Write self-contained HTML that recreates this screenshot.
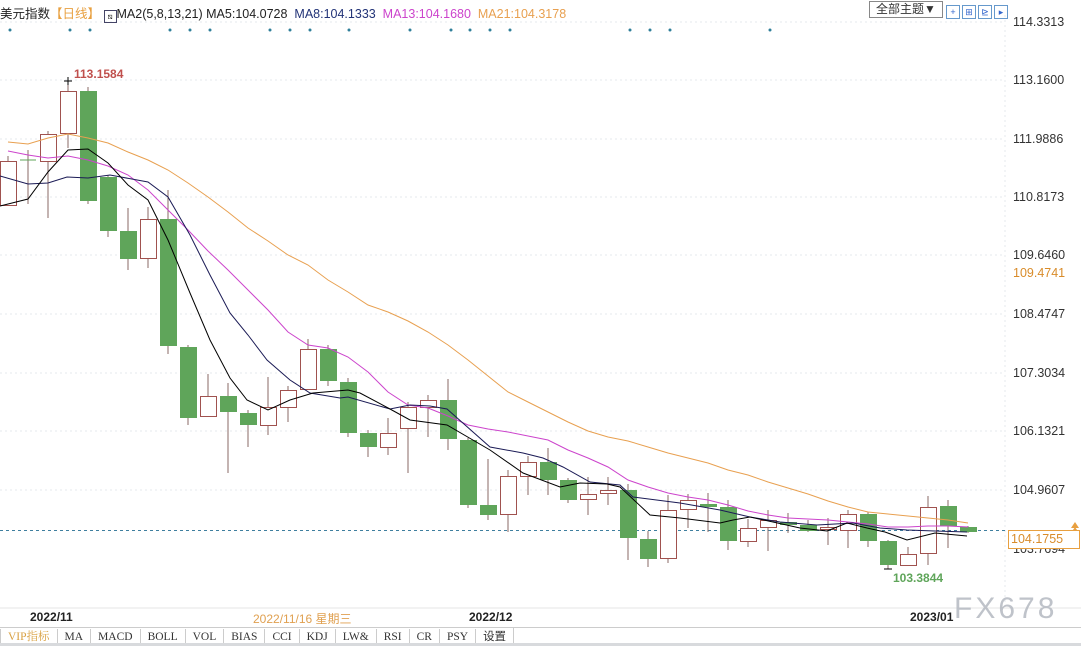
<!DOCTYPE html>
<html><head><meta charset="utf-8"><style>
body{margin:0;width:1081px;height:646px;overflow:hidden;background:#fff;font-family:"Liberation Sans","Noto Sans CJK SC",sans-serif;position:relative}
.t{position:absolute;white-space:nowrap}
.ax{position:absolute;left:1013px;font-size:12.5px;color:#333}
.tabs{position:absolute;left:0;top:627px;height:16px;width:1081px;border-top:1px solid #ccc;font-family:"Liberation Serif","Noto Serif CJK SC",serif;font-size:11.5px}
.tabs span{display:inline-block;height:16px;line-height:16px;padding:0 7px;border-right:1px solid #ccc;color:#333}
.ib{display:inline-block;width:12px;height:12px;border:1px solid #69c;margin-right:2px;font-size:9px;line-height:12px;text-align:center;color:#36c}
</style></head><body>
<svg width="1081" height="646" style="position:absolute;left:0;top:0">
<g stroke="#e4e8ee" stroke-dasharray="2,3" stroke-width="1">
<line x1="0" y1="22" x2="1005" y2="22"/><line x1="0" y1="80" x2="1005" y2="80"/><line x1="0" y1="139" x2="1005" y2="139"/><line x1="0" y1="197" x2="1005" y2="197"/><line x1="0" y1="255" x2="1005" y2="255"/><line x1="0" y1="314" x2="1005" y2="314"/><line x1="0" y1="373" x2="1005" y2="373"/><line x1="0" y1="431" x2="1005" y2="431"/><line x1="0" y1="490" x2="1005" y2="490"/>
<line x1="1005" y1="15" x2="1005" y2="608"/>
</g>
<line x1="0" y1="608" x2="1081" y2="608" stroke="#e6e6e6"/>
<line x1="0" y1="530.5" x2="1005" y2="530.5" stroke="#3f7f9f" stroke-dasharray="3,3"/>
<g fill="#2f7f9a">
<circle cx="10" cy="30" r="1.5"/><circle cx="70" cy="30" r="1.5"/><circle cx="90" cy="30" r="1.5"/><circle cx="170" cy="30" r="1.5"/><circle cx="190" cy="30" r="1.5"/><circle cx="210" cy="30" r="1.5"/><circle cx="270" cy="30" r="1.5"/><circle cx="290" cy="30" r="1.5"/><circle cx="310" cy="30" r="1.5"/><circle cx="349" cy="30" r="1.5"/><circle cx="410" cy="30" r="1.5"/><circle cx="451" cy="30" r="1.5"/><circle cx="470" cy="30" r="1.5"/><circle cx="490" cy="30" r="1.5"/><circle cx="510" cy="30" r="1.5"/><circle cx="630" cy="30" r="1.5"/><circle cx="650" cy="30" r="1.5"/><circle cx="670" cy="30" r="1.5"/><circle cx="770" cy="30" r="1.5"/>
</g>
<g stroke="#8a6a66" stroke-width="1">
<line x1="8" y1="156" x2="8" y2="205"/><line x1="28" y1="150" x2="28" y2="204"/><line x1="48" y1="131" x2="48" y2="218"/><line x1="68" y1="80" x2="68" y2="148"/><line x1="88" y1="87" x2="88" y2="204"/><line x1="108" y1="175" x2="108" y2="237"/><line x1="128" y1="208" x2="128" y2="270"/><line x1="148" y1="207" x2="148" y2="268"/><line x1="168" y1="190" x2="168" y2="354"/><line x1="188" y1="345" x2="188" y2="425"/><line x1="208" y1="374" x2="208" y2="416"/><line x1="228" y1="383" x2="228" y2="473"/><line x1="248" y1="410" x2="248" y2="447"/><line x1="268" y1="377" x2="268" y2="435"/><line x1="288" y1="386" x2="288" y2="422"/><line x1="308" y1="339" x2="308" y2="390"/><line x1="328" y1="345" x2="328" y2="386"/><line x1="348" y1="378" x2="348" y2="437"/><line x1="368" y1="430" x2="368" y2="457"/><line x1="388" y1="418" x2="388" y2="455"/><line x1="408" y1="402" x2="408" y2="473"/><line x1="428" y1="395" x2="428" y2="437"/><line x1="448" y1="379" x2="448" y2="450"/><line x1="468" y1="438" x2="468" y2="508"/><line x1="488" y1="459" x2="488" y2="520"/><line x1="508" y1="470" x2="508" y2="532"/><line x1="528" y1="456" x2="528" y2="495"/><line x1="548" y1="448" x2="548" y2="495"/><line x1="568" y1="478" x2="568" y2="503"/><line x1="588" y1="477" x2="588" y2="515"/><line x1="608" y1="477" x2="608" y2="505"/><line x1="628" y1="484" x2="628" y2="560"/><line x1="648" y1="531" x2="648" y2="567"/><line x1="668" y1="495" x2="668" y2="563"/><line x1="688" y1="494" x2="688" y2="528"/><line x1="708" y1="493" x2="708" y2="532"/><line x1="728" y1="500" x2="728" y2="550"/><line x1="748" y1="519" x2="748" y2="547"/><line x1="768" y1="510" x2="768" y2="551"/><line x1="788" y1="513" x2="788" y2="533"/><line x1="808" y1="520" x2="808" y2="532"/><line x1="828" y1="518" x2="828" y2="545"/><line x1="848" y1="510" x2="848" y2="548"/><line x1="868" y1="512" x2="868" y2="547"/><line x1="888" y1="540" x2="888" y2="569"/><line x1="908" y1="547" x2="908" y2="565"/><line x1="928" y1="496" x2="928" y2="565"/><line x1="948" y1="500" x2="948" y2="548"/><line x1="968" y1="526" x2="968" y2="533"/>
</g>
<g stroke="#000"><line x1="64" y1="81" x2="72" y2="81"/><line x1="68" y1="77" x2="68" y2="85"/><line x1="884" y1="569" x2="892" y2="569"/></g>
<g fill="#fff" stroke="#a0524f" stroke-width="1">
<rect x="0.5" y="161.5" width="16" height="44"/><rect x="40.5" y="134.5" width="16" height="27"/><rect x="60.5" y="91.5" width="16" height="42"/><rect x="140.5" y="219.5" width="16" height="39"/><rect x="200.5" y="396.5" width="16" height="20"/><rect x="260.5" y="407.5" width="16" height="18"/><rect x="280.5" y="390.5" width="16" height="17"/><rect x="300.5" y="349.5" width="16" height="40"/><rect x="380.5" y="433.5" width="16" height="14"/><rect x="400.5" y="407.5" width="16" height="21"/><rect x="420.5" y="400.5" width="16" height="7"/><rect x="500.5" y="476.5" width="16" height="38"/><rect x="520.5" y="462.5" width="16" height="14"/><rect x="580.5" y="494.5" width="16" height="5"/><rect x="600.5" y="490.5" width="16" height="3"/><rect x="660.5" y="510.5" width="16" height="48"/><rect x="680.5" y="500.5" width="16" height="9"/><rect x="740.5" y="528.5" width="16" height="13"/><rect x="760.5" y="520.5" width="16" height="7"/><rect x="820.5" y="527.5" width="16" height="2"/><rect x="840.5" y="514.5" width="16" height="16"/><rect x="900.5" y="554.5" width="16" height="11"/><rect x="920.5" y="507.5" width="16" height="46"/>
</g>
<line x1="20" y1="160" x2="36" y2="160" stroke="#5fa55a"/>
<g fill="#5fa55a">
<rect x="80" y="91" width="17" height="110"/><rect x="100" y="177" width="17" height="54"/><rect x="120" y="231" width="17" height="28"/><rect x="160" y="219" width="17" height="127"/><rect x="180" y="347" width="17" height="71"/><rect x="220" y="396" width="17" height="16"/><rect x="240" y="413" width="17" height="12"/><rect x="320" y="349" width="17" height="32"/><rect x="340" y="382" width="17" height="51"/><rect x="360" y="433" width="17" height="14"/><rect x="440" y="400" width="17" height="39"/><rect x="460" y="440" width="17" height="65"/><rect x="480" y="505" width="17" height="10"/><rect x="540" y="462" width="17" height="18"/><rect x="560" y="480" width="17" height="20"/><rect x="620" y="490" width="17" height="48"/><rect x="640" y="539" width="17" height="20"/><rect x="700" y="504" width="17" height="3"/><rect x="720" y="507" width="17" height="34"/><rect x="780" y="522" width="17" height="3"/><rect x="800" y="525" width="17" height="6"/><rect x="860" y="514" width="17" height="27"/><rect x="880" y="541" width="17" height="24"/><rect x="940" y="506" width="17" height="20"/><rect x="960" y="527" width="17" height="5"/>
</g>
<g fill="none" stroke-width="1">
<polyline stroke="#e8a050" points="8,142 28,144 48,138 68,134 88,138 108,143 128,152 148,160 168,170 188,183 208,197 228,212 248,228 268,241 288,255 308,265 328,280 348,292 368,305 388,312 408,321 428,332 448,345 468,360 488,376 508,392 528,402 548,412 568,422 588,431 608,437 628,441 648,447 668,453 688,458 708,463 728,470 748,475 768,482 788,488 808,494 828,501 848,507 868,512 888,514 908,516 928,518 948,520 968,523"/>
<polyline stroke="#cc44cc" points="8,151 28,155 48,158 68,156 88,160 108,166 128,175 148,190 168,210 188,230 208,251 228,270 248,290 268,310 288,332 308,345 328,348 348,357 368,372 388,392 408,405 428,408 448,416 468,425 488,429 508,432 528,436 548,440 568,450 588,458 608,467 628,480 648,487 668,493 688,497 708,500 728,505 748,511 768,515 788,518 808,519 828,520 848,522 868,524 888,527 908,527 928,526 948,526 968,527"/>
<polyline stroke="#1a1a55" points="0,176 28,184 48,183 67,177 88,178 110,175 148,182 168,197 190,235 210,275 230,313 248,335 267,360 290,380 310,393 340,398 348,397 390,409 410,405 430,406 447,409 490,447 523,453 543,458 563,467 590,482 620,485 633,497 680,503 720,510 750,517 780,522 817,525 853,523 880,528 907,530 935,531 967,532"/>
<polyline stroke="#000" points="0,206 28,199 48,172 68,150 88,149 108,163 128,185 148,200 168,240 190,293 210,340 230,378 247,400 268,410 290,400 313,393 348,390 360,393 390,409 410,420 447,425 490,450 523,473 560,487 580,483 607,484 620,487 650,515 680,518 720,523 733,520 750,517 773,522 800,528 827,531 847,523 867,528 885,532 907,540 935,533 967,536"/>
</g>
<path d="M1071 528 l4 -6 l4 6 z M1071 533 l4 -6 l4 6 z" fill="#e8a040"/>
</svg>
<div class="t" style="left:0;top:3px;font-size:12.5px;color:#222">美元指数<span style="color:#e8a040">【日线】</span> <span style="display:inline-block;width:11px;height:11px;border:1px solid #446;vertical-align:-1px;font-size:8px;line-height:11px;text-align:center">⧅</span>MA2(5,8,13,21) MA5:104.0728 &nbsp;<span style="color:#223377">MA8:104.1333</span> &nbsp;<span style="color:#cc44cc">MA13:104.1680</span> &nbsp;<span style="color:#e8a050">MA21:104.3178</span></div>
<div class="t" style="left:869px;top:1px;width:72px;height:15px;border:1px solid #888;font-size:12px;line-height:15px;text-align:center;color:#333">全部主题▼</div>
<div class="t" style="left:946px;top:2px"><span class="ib">+</span><span class="ib">⊞</span><span class="ib">⊵</span><span class="ib">▸</span></div>
<div class="ax" style="top:15px">114.3313</div>
<div class="ax" style="top:73px">113.1600</div>
<div class="ax" style="top:132px">111.9886</div>
<div class="ax" style="top:190px">110.8173</div>
<div class="ax" style="top:248px">109.6460</div>
<div class="ax" style="top:266px;color:#d98c2a">109.4741</div>
<div class="ax" style="top:307px">108.4747</div>
<div class="ax" style="top:366px">107.3034</div>
<div class="ax" style="top:424px">106.1321</div>
<div class="ax" style="top:483px">104.9607</div>
<div class="ax" style="top:542px">103.7694</div>
<div class="t" style="left:1008px;top:530px;width:68px;height:17px;border:1px solid #e8a040;background:#fff;color:#d98c2a;font-size:12.5px;line-height:17px;padding-left:2px">104.1755</div>
<div class="t" style="left:74px;top:67px;font-size:12px;font-weight:bold;color:#c0504d">113.1584</div>
<div class="t" style="left:893px;top:571px;font-size:12px;font-weight:bold;color:#5fa55a">103.3844</div>
<div class="t" style="left:30px;top:610px;font-size:12px;font-weight:bold;color:#222">2022/11</div>
<div class="t" style="left:253px;top:610px;font-size:12px;color:#e0a050">2022/11/16 星期三</div>
<div class="t" style="left:469px;top:610px;font-size:12px;font-weight:bold;color:#222">2022/12</div>
<div class="t" style="left:910px;top:610px;font-size:12px;font-weight:bold;color:#222">2023/01</div>
<div class="t" style="left:954px;top:592px;font-size:30px;color:#b4b9c1;letter-spacing:3px;opacity:.85">FX678</div>
<div class="tabs"><span style="border-left:1px solid #ccc;color:#d9a040">VIP指标</span><span>MA</span><span>MACD</span><span>BOLL</span><span>VOL</span><span>BIAS</span><span>CCI</span><span>KDJ</span><span>LW&amp;</span><span>RSI</span><span>CR</span><span>PSY</span><span style="font-family:'Noto Sans CJK SC',sans-serif">设置</span></div>
<div class="t" style="left:0;top:643px;width:1081px;height:3px;background:#d8dadd"></div>
</body></html>
